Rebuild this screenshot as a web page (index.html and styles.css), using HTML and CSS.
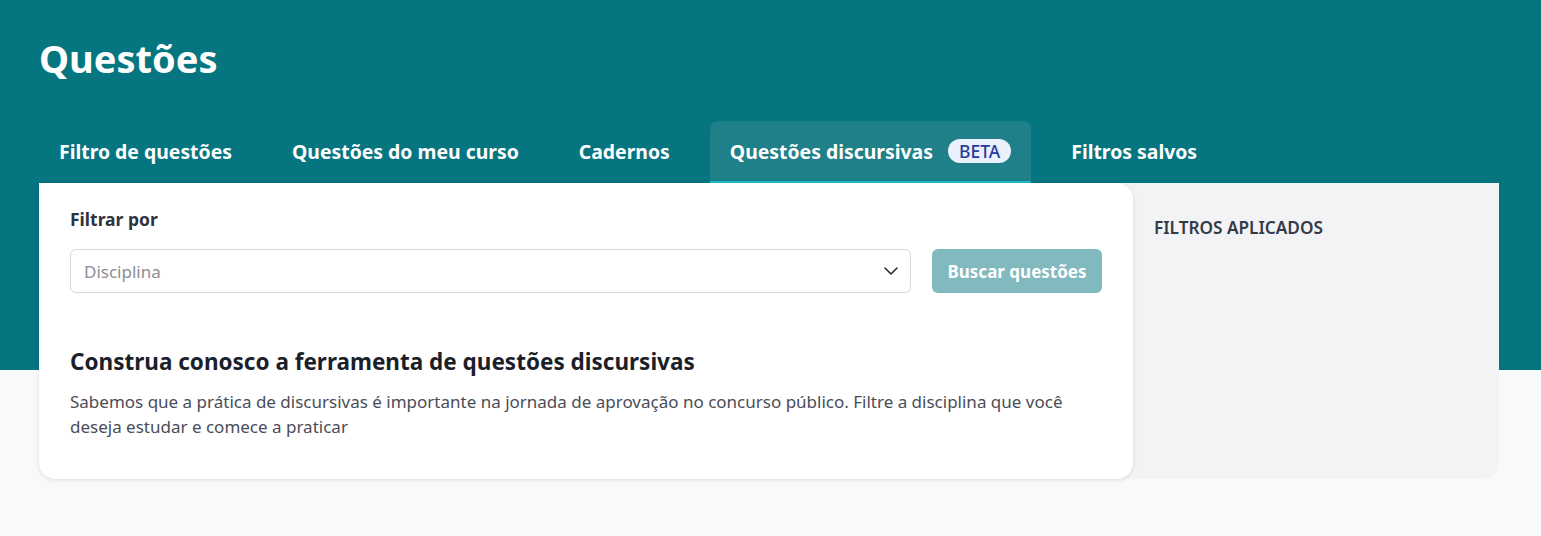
FILE: index.html
```html
<!DOCTYPE html>
<html lang="pt-BR">
<head>
<meta charset="utf-8">
<title>Questões</title>
<link rel="stylesheet" href="styles.css">
</head>
<body>
<div class="page">
  <h1 class="title">Questões</h1>
  <nav class="tabs">
    <a class="tab">Filtro de questões</a>
    <a class="tab">Questões do meu curso</a>
    <a class="tab">Cadernos</a>
    <a class="tab tab-active">Questões discursivas <span class="badge">BETA</span></a>
    <a class="tab">Filtros salvos</a>
  </nav>
  <section class="panel">
    <div class="card">
      <div class="label">Filtrar por</div>
      <div class="filter-row">
        <div class="select">
          <span class="placeholder">Disciplina</span>
          <svg class="chevron" width="14" height="8" viewBox="0 0 14 8"><path d="M1 1l6 6 6-6" fill="none" stroke="#2b2f36" stroke-width="1.6" stroke-linecap="round" stroke-linejoin="round"/></svg>
        </div>
        <button class="btn">Buscar questões</button>
      </div>
      <h2 class="heading">Construa conosco a ferramenta de questões discursivas</h2>
      <p class="text">Sabemos que a prática de discursivas é importante na jornada de aprovação no concurso público. Filtre a disciplina que você deseja estudar e comece a praticar</p>
    </div>
    <aside class="aside">
      <div class="aside-title">FILTROS APLICADOS</div>
    </aside>
  </section>
</div>
</body>
</html>
```
FILE: styles.css
```css
html, body {
  margin: 0;
  padding: 0;
}
body {
  font-family: "Noto Sans", "Open Sans", sans-serif;
  background: #f8f9fa;
}
.page {
  background: linear-gradient(to bottom, #05757f 0, #05757f 370px, #f8f9fa 370px);
  padding: 34px 42px 57px 39px;
  min-height: 536px;
  box-sizing: border-box;
}
.title {
  margin: 0 0 39px 0;
  font-size: 38px;
  line-height: 48px;
  font-weight: 700;
  color: #ffffff;
}
.tabs {
  display: flex;
  gap: 20px;
  height: 62px;
}
.tab {
  display: flex;
  align-items: center;
  padding: 0 20px 2px 20px;
  font-size: 19.4px;
  font-weight: 700;
  color: #ffffff;
  border-radius: 8px 8px 0 0;
  box-sizing: border-box;
}
.tab-active {
  background: #1f8089;
  border-bottom: 2px solid #1dbcc8;
  padding-bottom: 0;
}
.badge {
  margin-left: 15px;
  background: #eaf1fd;
  color: #283a9c;
  font-size: 17.5px;
  font-weight: 500;
  line-height: 24px;
  padding: 0 11px;
  border-radius: 12px;
}
.panel {
  display: flex;
  background: #f2f3f5;
  border-radius: 0 0 16px 16px;
}
.card {
  width: 1094px;
  box-sizing: border-box;
  background: #ffffff;
  border-radius: 0 16px 16px 16px;
  box-shadow: 0 1px 4px rgba(0, 0, 0, 0.12);
  padding: 24px 31px 40px 31px;
}
.label {
  font-size: 17.5px;
  line-height: 24px;
  font-weight: 700;
  color: #2d3340;
}
.filter-row {
  display: flex;
  gap: 21px;
  margin-top: 18px;
}
.select {
  flex: 1;
  height: 44px;
  box-sizing: border-box;
  border: 1px solid #d6d8dc;
  border-radius: 6px;
  display: flex;
  align-items: center;
  justify-content: space-between;
  padding: 0 12px 0 13px;
}
.placeholder {
  font-size: 17px;
  color: #8b8e94;
}
.btn {
  width: 170px;
  height: 44px;
  border: none;
  border-radius: 6px;
  background: #81b9bf;
  color: #ffffff;
  font-family: inherit;
  font-size: 17px;
  font-weight: 700;
  padding: 0;
}
.heading {
  margin: 54px 0 12px 0;
  font-size: 22.5px;
  line-height: 30px;
  font-weight: 700;
  color: #1b1f2a;
}
.text {
  margin: 0;
  font-size: 17px;
  line-height: 25px;
  color: #4a4d57;
}
.aside {
  flex: 1;
  padding: 33px 21px;
}
.aside-title {
  font-size: 17.2px;
  line-height: 24px;
  font-weight: 600;
  color: #343a48;
}
```
